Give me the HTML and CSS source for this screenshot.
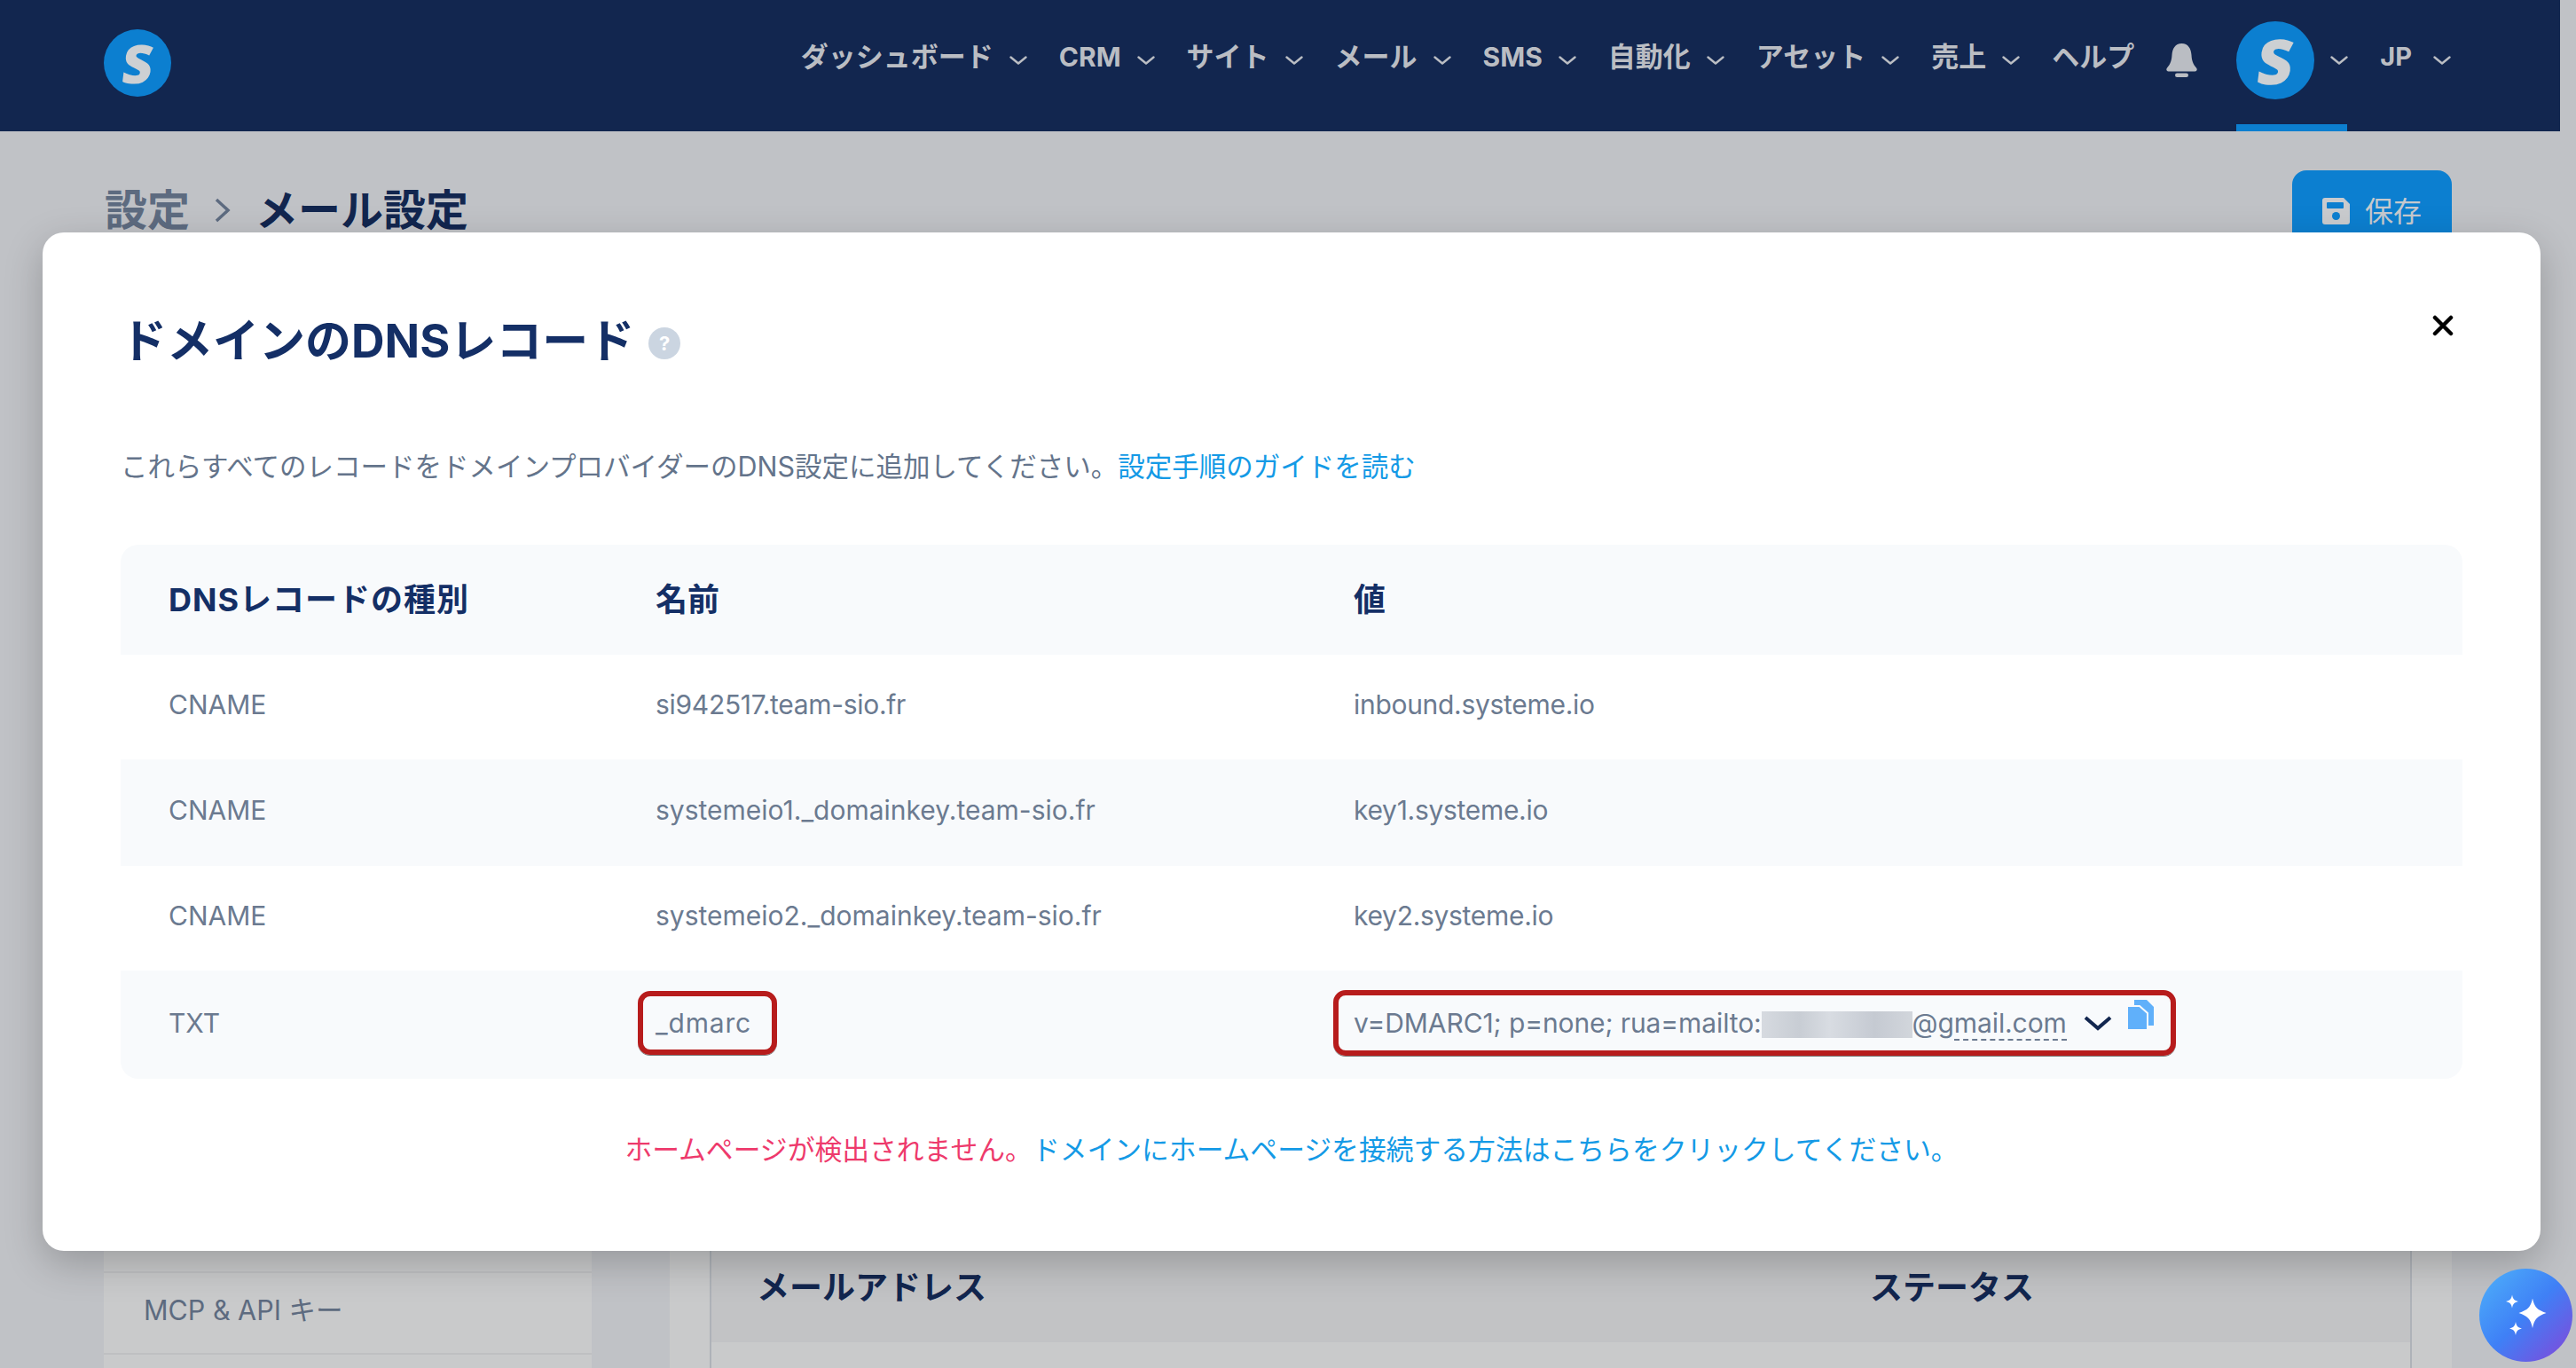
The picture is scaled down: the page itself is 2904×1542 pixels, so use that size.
FILE: index.html
```html
<!DOCTYPE html>
<html lang="ja">
<head>
    <meta charset="UTF-8">
    <meta name="viewport" content="width=device-width, initial-scale=1.0">
    <title>メール設定</title>
    <link rel="stylesheet" href="styles.css">
</head>
<body>
    <div class="page">
        <header class="navbar">
            <a href="#" class="logo"><span class="logo-s">S</span></a>
            <nav class="nav-links">
                <a href="#" class="nav-item"><span class="nav-label">ダッシュボード</span><svg class="chev" viewBox="0 0 20 10"><path d="M1.5 1.5 10 8.5l8.500-7"/></svg></a>
                <a href="#" class="nav-item"><span class="nav-label nav-latin">CRM</span><svg class="chev" viewBox="0 0 20 10"><path d="M1.5 1.5 10 8.5l8.500-7"/></svg></a>
                <a href="#" class="nav-item"><span class="nav-label">サイト</span><svg class="chev" viewBox="0 0 20 10"><path d="M1.5 1.5 10 8.5l8.500-7"/></svg></a>
                <a href="#" class="nav-item"><span class="nav-label">メール</span><svg class="chev" viewBox="0 0 20 10"><path d="M1.5 1.5 10 8.5l8.500-7"/></svg></a>
                <a href="#" class="nav-item"><span class="nav-label nav-latin">SMS</span><svg class="chev" viewBox="0 0 20 10"><path d="M1.5 1.5 10 8.5l8.500-7"/></svg></a>
                <a href="#" class="nav-item"><span class="nav-label">自動化</span><svg class="chev" viewBox="0 0 20 10"><path d="M1.5 1.5 10 8.5l8.500-7"/></svg></a>
                <a href="#" class="nav-item"><span class="nav-label">アセット</span><svg class="chev" viewBox="0 0 20 10"><path d="M1.5 1.5 10 8.5l8.500-7"/></svg></a>
                <a href="#" class="nav-item"><span class="nav-label">売上</span><svg class="chev" viewBox="0 0 20 10"><path d="M1.5 1.5 10 8.5l8.500-7"/></svg></a>
                <a href="#" class="nav-item"><span class="nav-label">ヘルプ</span></a>
                <a href="#" class="nav-bell">
                    <svg viewBox="0 0 35 38"><path d="M17.500 0C25 0 28 6 28.500 13c.4 6 1.500 10 5.500 14.500 1.500 1.700.5 4-1.500 4H2.500c-2 0-3-2.300-1.500-4C5 23 6.100 19 6.500 13 7 6 10 0 17.500 0z"/><rect x="10" y="33.500" width="15" height="4.500" rx="2.200"/></svg>
                </a>
                <a href="#" class="nav-user">
                    <span class="avatar"><span class="avatar-s">S</span></span>
                    <svg class="chev" viewBox="0 0 20 10"><path d="M1.5 1.5 10 8.500l8.500-7"/></svg>
                    <span class="nav-active"></span>
                </a>
                <a href="#" class="nav-item nav-lang"><span class="nav-label nav-latin">JP</span><svg class="chev" viewBox="0 0 20 10"><path d="M1.500 1.500 10 8.500l8.500-7"/></svg></a>
            </nav>
        </header>

        <div class="title-row">
            <h1 class="page-title">
                <span class="crumb">設定</span>
                <svg class="crumb-sep" viewBox="0 0 18 28"><path d="M2 2l13 12L2 26"/></svg>
                <span>メール設定</span>
            </h1>
            <button class="btn-save">
                <svg viewBox="0 0 31 30"><path class="disk" d="M3 0h21l7 7v20a3 3 0 0 1-3 3H3a3 3 0 0 1-3-3V3a3 3 0 0 1 3-3z"/><rect class="disk-hole" x="5" y="5" width="19" height="7" rx="1"/><circle class="disk-hole" cx="15.500" cy="20.500" r="4.500"/></svg>
                <span class="save-label">保存</span>
            </button>
        </div>

        <div class="settings-body">
            <aside class="side-menu">
                <a href="#" class="side-item">MCP &amp; API キー</a>
                <a href="#" class="side-item"></a>
            </aside>
            <section class="card">
                <div class="mail-table">
                    <div class="mail-head">
                        <span>メールアドレス</span>
                        <span>ステータス</span>
                    </div>
                </div>
            </section>
        </div>
    </div>

    <!-- DNS Modal -->
    <div class="overlay">
        <div class="modal">
            <button class="modal-close">
                <svg viewBox="0 0 24 24"><path d="M3 3l18 18M21 3L3 21"/></svg>
            </button>
            <h2 class="modal-title">ドメインのDNSレコード<span class="help-dot">?</span></h2>
            <p class="modal-desc">これらすべてのレコードをドメインプロバイダーのDNS設定に追加してください。<a href="#">設定手順のガイドを読む</a></p>

            <div class="dns-table">
                <div class="dns-row dns-head">
                    <div>DNSレコードの種別</div>
                    <div>名前</div>
                    <div>値</div>
                </div>
                <div class="dns-row">
                    <div>CNAME</div>
                    <div>si942517.team-sio.fr</div>
                    <div>inbound.systeme.io</div>
                </div>
                <div class="dns-row dns-alt">
                    <div>CNAME</div>
                    <div class="dns-long">systemeio1._domainkey.team-sio.fr</div>
                    <div>key1.systeme.io</div>
                </div>
                <div class="dns-row">
                    <div>CNAME</div>
                    <div class="dns-long">systemeio2._domainkey.team-sio.fr</div>
                    <div>key2.systeme.io</div>
                </div>
                <div class="dns-row dns-alt dns-last">
                    <div>TXT</div>
                    <div><span class="mark mark-name">_dmarc</span></div>
                    <div>
                        <span class="mark mark-value">
                            <span class="value-text">v=DMARC1; p=none; rua=mailto:<span class="blur-patch"></span>@g<span class="dashed">mail.com</span></span>
                            <svg class="value-chev" viewBox="0 0 32 17"><path d="M2 2l14 12L30 2"/></svg>
                            <svg class="copy-icon" viewBox="0 0 30 34"><path class="copy-back" d="M8 0h14l8 8v21H8z"/><path class="copy-front" d="M0 7h14l9 8v19H0z"/></svg>
                        </span>
                    </div>
                </div>
            </div>

            <p class="modal-note"><span class="note-error">ホームページが検出されません。</span><a href="#">ドメインにホームページを接続する方法はこちらをクリックしてください。</a></p>
        </div>
    </div>

    <button class="ai-btn">
        <svg viewBox="-52.500 -52.500 105 105">
            <path d="M7.500-19C9.500-9 13-6 23-2.500 13 1 9.500 4 7.500 14.500 5.500 4 2 1-8-2.500 2-6 5.500-9 7.500-19z"/>
            <path d="M-15.500-23C-14.500-18-13-16.500-8.500-15.500-13-14.500-14.500-13-15.500-8-16.500-13-18-14.500-22.500-15.500-18-16.500-16.500-18-15.500-23z"/>
            <path d="M-11.500 7.500C-10.500 12.500-9 14-4.500 15-9 16-10.500 17.500-11.500 22.500-12.500 17.500-14 16-18.500 15-14 14-12.500 12.500-11.500 7.500z"/>
        </svg>
    </button>
</body>
</html>
```

FILE: styles.css
```css
* {
    margin: 0;
    padding: 0;
    box-sizing: border-box;
    font-family: Inter, "Noto Sans CJK JP", sans-serif;
}

body {
    width: 2904px;
    height: 1542px;
    overflow: hidden;
    background-color: #c0c2c6;
    position: relative;
}

a {
    text-decoration: none;
    color: inherit;
}

.page {
    height: 1542px;
    overflow: hidden;
}

/* top bar (dimmed by the modal backdrop) */
.navbar {
    width: 2886px;
    height: 148px;
    padding: 0 123px 6px 117px;
    background-color: #12264f;
    display: flex;
    justify-content: space-between;
    align-items: center;
}

.logo {
    width: 76px;
    height: 76px;
    border-radius: 50%;
    background-color: #0c7fd0;
    display: flex;
    align-items: center;
    justify-content: center;
}

.logo-s,
.avatar-s {
    display: inline-block;
    font-family: "Open Sans", sans-serif;
    font-weight: 800;
    color: #cdd0d3;
    line-height: 1;
    transform: skewX(-7deg);
}

.logo-s {
    font-size: 60px;
}

.avatar-s {
    font-size: 70px;
}

.nav-links {
    display: flex;
    align-items: center;
    gap: 36px;
    padding-bottom: 6px;
    color: #babdc3;
    font-size: 31px;
    font-weight: 700;
}

.nav-item {
    display: flex;
    align-items: center;
    gap: 18px;
}

.nav-label {
    line-height: 40px;
    padding-bottom: 8px;
}

.nav-latin {
    font-size: 30px;
}

.chev {
    width: 20px;
    height: 10px;
    fill: none;
    stroke: #babdc3;
    stroke-width: 2.4;
    stroke-linecap: round;
    stroke-linejoin: round;
}

.nav-bell {
    display: flex;
    margin-right: 8px;
}

.nav-bell svg {
    width: 35px;
    height: 38px;
    fill: #babdc3;
}

.nav-user {
    position: relative;
    display: flex;
    align-items: center;
    gap: 18px;
}

.avatar {
    width: 88px;
    height: 88px;
    border-radius: 50%;
    background-color: #0c7fd0;
    display: flex;
    align-items: center;
    justify-content: center;
}

.nav-active {
    position: absolute;
    left: 0;
    top: 116px;
    width: 125px;
    height: 8px;
    background-color: #0c7fd0;
}

.nav-lang {
    gap: 24px;
}

.nav-lang .nav-latin {
    font-size: 29px;
}

/* page underneath the modal */
.title-row {
    height: 92px;
    margin-top: 44px;
    padding: 0 140px 0 118px;
    display: flex;
    justify-content: space-between;
    align-items: center;
}

.page-title {
    display: flex;
    align-items: center;
    gap: 28px;
    padding-bottom: 3px;
    font-size: 48px;
    line-height: 60px;
    font-weight: 700;
    color: #12264f;
}

.crumb {
    color: #5d6b80;
}

.crumb-sep {
    width: 18px;
    height: 28px;
    fill: none;
    stroke: #5d6b80;
    stroke-width: 3.5;
}

.btn-save {
    width: 180px;
    height: 92px;
    border: none;
    border-radius: 16px;
    background-color: #0c7fd0;
    color: #c6c9cd;
    font-size: 32px;
    display: flex;
    align-items: center;
    justify-content: center;
    gap: 17px;
}

.btn-save svg {
    width: 31px;
    height: 30px;
}

.save-label {
    padding-bottom: 5px;
}

.disk {
    fill: #c9cbce;
}

.disk-hole {
    fill: #0c7fd0;
}

.settings-body {
    margin-top: 56px;
    padding: 0 140px 0 117px;
    display: grid;
    grid-template-columns: 550px 1fr;
    gap: 88px;
}

.side-menu {
    padding-top: 1093px;
    background-color: #c9cacb;
}

.side-item {
    display: block;
    height: 92px;
    padding-left: 45px;
    border-top: 2px solid #bfc0c2;
    font-size: 30.500px;
    line-height: 84px;
    color: #5d6b80;
}

.card {
    padding: 60px 45px 0;
    min-height: 1300px;
    background-color: #c9cacb;
}

.mail-table {
    height: 1200px;
    border-left: 2px solid #aeb2b8;
    border-right: 2px solid #aeb2b8;
}

.mail-head {
    height: 1113px;
    padding: 0 0 39px 51px;
    background-color: #c2c3c5;
    display: grid;
    grid-template-columns: 1255px 1fr;
    align-items: end;
    font-size: 37px;
    line-height: 44px;
    font-weight: 700;
    color: #12264f;
}

/* modal */
.overlay {
    position: absolute;
    inset: 0;
    padding: 262px 40px 0 48px;
}

.modal {
    position: relative;
    height: 1148px;
    padding: 93px 88px 0;
    background: #fff;
    border-radius: 24px;
    box-shadow: 0 14px 44px rgba(0, 0, 0, 0.22);
}

.modal-close {
    position: absolute;
    top: 93px;
    right: 98px;
    width: 24px;
    height: 24px;
    border: none;
    background: none;
    display: flex;
}

.modal-close svg {
    width: 24px;
    height: 24px;
    fill: none;
    stroke: #000;
    stroke-width: 4.500;
    stroke-linecap: round;
}

.modal-title {
    display: flex;
    align-items: center;
    font-size: 52px;
    line-height: 60px;
    font-weight: 700;
    color: #142f66;
}

.help-dot {
    width: 36px;
    height: 36px;
    margin: 3px 0 0 16px;
    border-radius: 50%;
    background-color: #cbd5e1;
    color: #fff;
    font-size: 22px;
    line-height: 36px;
    text-align: center;
}

.modal-desc {
    margin-top: 89px;
    font-size: 30.500px;
    line-height: 44px;
    color: #64748b;
}

.modal-desc a,
.modal-note a {
    color: #149ae6;
}

.dns-table {
    margin-top: 66px;
}

.dns-row {
    display: grid;
    grid-template-columns: 549px 787px 1fr;
    align-items: center;
    height: 118px;
    padding: 0 0 6px 54px;
    font-size: 30px;
    letter-spacing: -0.3px;
    color: #6b7a90;
}

.dns-row div:first-child,
.dns-long {
    letter-spacing: 0;
}

.dns-alt {
    height: 120px;
    background-color: #f8fafc;
}

.dns-head {
    height: 124px;
    background-color: #f8fafc;
    border-radius: 20px 20px 0 0;
    font-size: 36px;
    font-weight: 700;
    letter-spacing: 0;
    color: #142f66;
}

.dns-head div:first-child {
    letter-spacing: 1px;
}

.dns-last {
    height: 122px;
    padding-bottom: 4px;
    border-radius: 0 0 20px 20px;
}

.mark {
    display: inline-flex;
    align-items: center;
    border: 6px solid #b71c1c;
    border-radius: 14px;
    box-shadow: 0 1px 0 #777;
    white-space: nowrap;
}

.mark-name {
    height: 72px;
    width: 157px;
    margin-left: -20px;
    padding-left: 14px;
    letter-spacing: 0.8px;
}

.mark-value {
    height: 74px;
    width: 950px;
    margin-left: -23px;
    padding-left: 17px;
    letter-spacing: -0.1px;
}

.blur-patch {
    display: inline-block;
    width: 170px;
    height: 30px;
    vertical-align: -6px;
    background: linear-gradient(90deg, #d6dae0, #c8cdd4 25%, #d8dce2 45%, #c5cad2 75%, #d2d6dc);
}

.dashed {
    border-bottom: 2px dashed #6b7a90;
}

.value-chev {
    width: 32px;
    height: 17px;
    margin-left: 19px;
    fill: none;
    stroke: #12264f;
    stroke-width: 4;
}

.copy-icon {
    width: 30px;
    height: 34px;
    margin: -18px 0 0 17px;
}

.copy-back {
    fill: #60b0fa;
}

.copy-front {
    fill: #60b0fa;
    stroke: #f8fafc;
    stroke-width: 2;
}

.modal-note {
    margin-top: 58px;
    font-size: 30.800px;
    line-height: 44px;
    text-align: center;
}

.note-error {
    color: #ee3a6c;
}

/* floating assistant */
.ai-btn {
    position: absolute;
    left: 2795px;
    top: 1430px;
    width: 105px;
    height: 105px;
    border: none;
    border-radius: 50%;
    background: linear-gradient(135deg, #4ba8f9 10%, #3f80f6 50%, #7a4edd 92%);
    display: flex;
}

.ai-btn svg {
    width: 105px;
    height: 105px;
    fill: #fff;
}
```
